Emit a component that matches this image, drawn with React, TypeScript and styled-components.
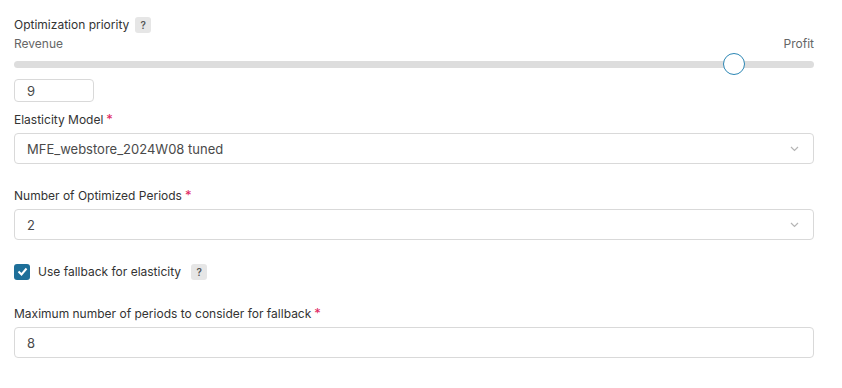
import React, { useState } from 'react'
import styled, { createGlobalStyle } from 'styled-components'

const GlobalStyle = createGlobalStyle`
  body {
    margin: 0;
    background: #ffffff;
    font-family: Inter, "Noto Sans", sans-serif;
    color: #333333;
  }
`

const Form = styled.div`
  width: 800px;
  padding: 17px 14px 0;
  display: flex;
  flex-direction: column;
`

const Field = styled.div<{ mt?: number }>`
  display: flex;
  flex-direction: column;
  margin-top: ${({ mt }) => mt ?? 0}px;
`

const Label = styled.div`
  display: flex;
  align-items: center;
  gap: 4px;
  height: 16px;
  font-size: 12px;
  line-height: 16px;
  color: #333333;
  margin-bottom: 5px;
`

const Required = styled.span`
  color: #e0245e;
  font-size: 13px;
  margin-left: -1px;
  align-self: flex-start;
  line-height: 14px;
`

const Help = styled.span`
  display: inline-flex;
  align-items: center;
  justify-content: center;
  width: 16px;
  height: 16px;
  border-radius: 3px;
  background: #e6e6e6;
  color: #555555;
  font-size: 10px;
  font-weight: 600;
  margin-left: 2px;
`

const Ends = styled.div`
  display: flex;
  justify-content: space-between;
  font-size: 12px;
  line-height: 16px;
  color: #666666;
  margin-top: -2px;
`

const SliderWrap = styled.div`
  position: relative;
  height: 22px;
  margin-top: 1px;
  display: flex;
  align-items: center;
`

const Track = styled.div`
  width: 100%;
  height: 7px;
  border-radius: 4px;
  background: #dddddd;
`

const Thumb = styled.div`
  position: absolute;
  top: 0;
  width: 22px;
  height: 22px;
  box-sizing: border-box;
  border-radius: 50%;
  border: 1.5px solid #2b86b4;
  background: #ffffff;
  transform: translateX(-50%);
`

const Box = styled.div<{ w?: number; h?: number }>`
  box-sizing: border-box;
  width: ${({ w }) => (w ? `${w}px` : '100%')};
  height: ${({ h }) => h ?? 31}px;
  border: 1px solid #d9d9d9;
  border-radius: 4px;
  background: #ffffff;
  display: flex;
  align-items: center;
  justify-content: space-between;
  padding: 0 14px 0 12px;
  font-size: 13px;
  color: #4a4a4a;
`

const Chevron = () => (
  <svg width="9" height="6" viewBox="0 0 9 6">
    <path d="M1 1l3.5 3.5L8 1" fill="none" stroke="#b5b5b5" strokeWidth="1.2" />
  </svg>
)

const CheckRow = styled.label`
  display: flex;
  align-items: center;
  gap: 8px;
  font-size: 12px;
  color: #333333;
  margin-top: 23px;
  height: 17px;
`

const CheckBox = styled.span`
  width: 16px;
  height: 16px;
  border-radius: 3px;
  background: #1e6f99;
  display: inline-flex;
  align-items: center;
  justify-content: center;
`

export default function App() {
  const [value] = useState(9)
  const pct = (value / 10) * 100
  return (
    <>
      <GlobalStyle />
      <Form>
        <Field>
          <Label>
            Optimization priority <Help>?</Help>
          </Label>
          <Ends>
            <span>Revenue</span>
            <span>Profit</span>
          </Ends>
          <SliderWrap>
            <Track />
            <Thumb style={{ left: `${pct}%` }} />
          </SliderWrap>
          <Box w={80} h={23} style={{ marginTop: 4 }}>
            {value}
          </Box>
        </Field>

        <Field mt={10}>
          <Label>
            Elasticity Model <Required>*</Required>
          </Label>
          <Box>
            <span>MFE_webstore_2024W08 tuned</span>
            <Chevron />
          </Box>
        </Field>

        <Field mt={24}>
          <Label>
            Number of Optimized Periods <Required>*</Required>
          </Label>
          <Box>
            <span>2</span>
            <Chevron />
          </Box>
        </Field>

        <CheckRow>
          <CheckBox>
            <svg width="11" height="9" viewBox="0 0 11 9">
              <path d="M1.5 4.5l3 3L9.5 1.5" fill="none" stroke="#ffffff" strokeWidth="2" />
            </svg>
          </CheckBox>
          Use fallback for elasticity <Help>?</Help>
        </CheckRow>

        <Field mt={26}>
          <Label>
            Maximum number of periods to consider for fallback <Required>*</Required>
          </Label>
          <Box>
            <span>8</span>
          </Box>
        </Field>
      </Form>
    </>
  )
}
